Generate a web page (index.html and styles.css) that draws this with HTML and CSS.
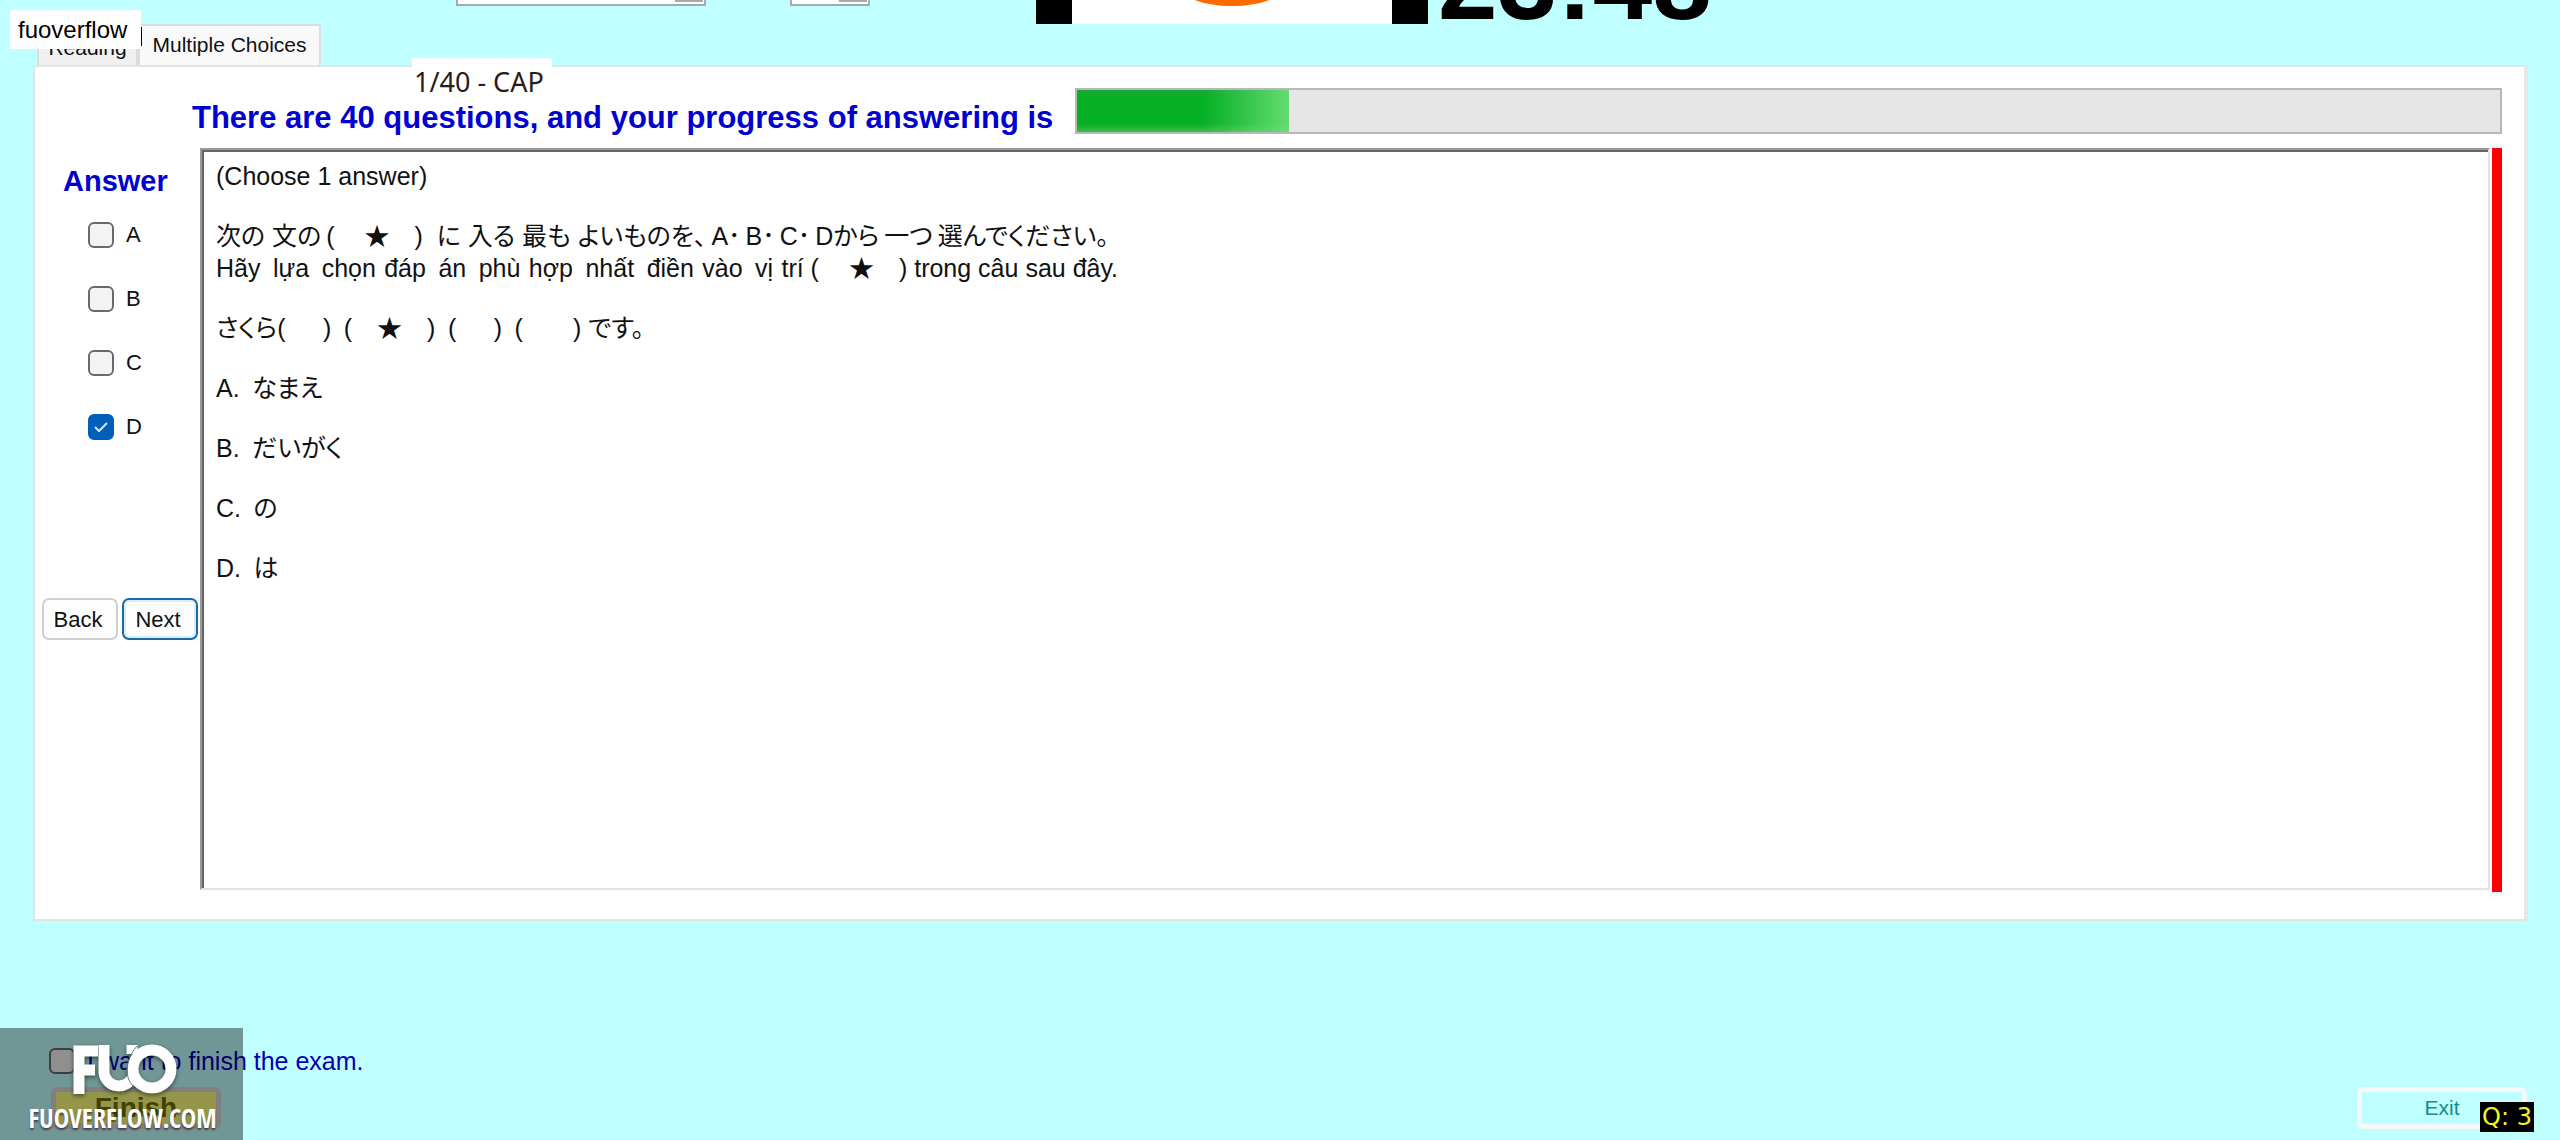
FILE: index.html
```html
<!DOCTYPE html>
<html lang="vi">
<head>
<meta charset="utf-8">
<title>Multiple Choices</title>
<link rel="stylesheet" href="styles.css">
</head>
<body>
<header class="topbar">
  <select class="combo combo-wide" aria-label="Font"><option></option></select>
  <select class="combo combo-size" aria-label="Size"><option></option></select>
  <div class="picture">
    <svg width="76" height="24" viewBox="0 0 76 24" aria-hidden="true"><ellipse cx="38" cy="-14" rx="52" ry="20" fill="#ff6a00"/></svg>
  </div>
  <div class="timer">23:48</div>
</header>

<nav class="tabs">
  <button class="tab tab-reading" type="button">Reading</button>
  <button class="tab tab-active" type="button">Multiple Choices</button>
</nav>

<main class="panel">
  <div class="counter">1/40 - CAP</div>
  <div class="status">
    <label class="status-text" for="progress">There are 40 questions, and your progress of answering is</label>
    <progress class="progress" id="progress" max="1000" value="149"></progress>
  </div>
  <div class="work">
    <aside class="side">
      <h2 class="side-title">Answer</h2>
      <label class="choice"><input class="tick" type="checkbox">A</label>
      <label class="choice"><input class="tick" type="checkbox">B</label>
      <label class="choice"><input class="tick" type="checkbox">C</label>
      <label class="choice"><input class="tick" type="checkbox" checked>D</label>
      <div class="pager">
        <button class="btn" type="button">Back</button>
        <button class="btn btn-focus" type="button">Next</button>
      </div>
    </aside>
    <article class="question">
      <p class="line">(Choose 1 answer)</p>
      <p class="line"><span lang="ja">次の 文の&thinsp;(　&thinsp;★　)&nbsp; に 入る 最も よいものを、&thinsp;A･&thinsp;B･&thinsp;C･&thinsp;Dから&thinsp;一つ&thinsp;選んでください。</span><br>Hãy&ensp;lựa&ensp;chọn&emsp13;đáp&ensp;án&ensp;phù&emsp13;hợp&ensp;nhất&ensp;điền&emsp13;vào&ensp;vị&emsp13;trí (　&thinsp;★　) trong câu sau đây.</p>
      <p class="line" lang="ja">さくら(　&ensp;)&ensp;(　★　)&ensp;(　&ensp;)&ensp;(　&ensp;&ensp;)&nbsp;です。</p>
      <p class="line">A.&ensp;<span lang="ja">なまえ</span></p>
      <p class="line">B.&ensp;<span lang="ja">だいがく</span></p>
      <p class="line">C.&ensp;<span lang="ja">の</span></p>
      <p class="line">D.&ensp;<span lang="ja">は</span></p>
    </article>
    <div class="marker"></div>
  </div>
</main>

<footer class="footer">
  <div class="finish-group">
    <label class="finish-label"><input class="tick" type="checkbox">I want to finish the exam.</label>
    <button class="btn-finish" type="button">Finish</button>
  </div>
  <button class="btn-exit" type="button">Exit</button>
</footer>

<div class="tag">fuoverflow</div>
<div class="qbadge">Q: 3</div>
<div class="watermark">
  <svg class="logo" width="104" height="52" viewBox="0 0 104 52" role="img" aria-label="FUO">
    <g fill="none" stroke="#fff" stroke-width="11">
      <path d="M6 50V7H25M6 26H22"/>
      <path d="M31 1V29A15 15 0 0 0 60 32"/>
      <path d="M59 1V10"/>
      <circle cx="79" cy="25" r="19"/>
    </g>
    <path d="M64 2Q55 12 54 26Q54 36 60 42" fill="none" stroke="#5f8080" stroke-width="1"/>
  </svg>
  <div class="site">FUOVERFLOW.COM</div>
</div>
</body>
</html>
```
FILE: styles.css
```css
* { box-sizing: border-box; }

body {
  margin: 0;
  min-height: 100vh;
  position: relative;
  background: #c0ffff;
  color: #111;
  font-family: "Liberation Sans", "Noto Sans CJK JP", sans-serif;
  font-size: 25px;
}

button, select { font-family: inherit; margin: 0; }

[lang="ja"] { font-feature-settings: "palt"; }

/* The top bar shows only the lower edge of its controls */
.topbar {
  display: flex;
  align-items: flex-start;
  height: 24px;
  overflow: hidden;
  padding-left: 456px;
}
.combo {
  appearance: none;
  height: 30px;
  margin-top: -24px;
  border: 2px solid #a0aab0;
  border-radius: 0;
  background: linear-gradient(#a8a8a8, #a8a8a8) right 1px top / 28px 24px no-repeat #fff;
}
.combo-wide { width: 250px; }
.combo-size { width: 80px; margin-left: 84px; }
.picture {
  display: flex;
  justify-content: center;
  width: 392px;
  height: 24px;
  margin-left: 166px;
  border: solid #000;
  border-width: 0 36px;
  background: #fff;
}
.timer {
  margin: -78px 0 0 10px;
  color: #000;
  font-size: 107px;
  font-weight: bold;
  line-height: 120px;
}

.tabs {
  display: flex;
  align-items: flex-end;
  height: 42px;
  padding-left: 37px;
}
.tab {
  border: 2px solid #dcdcdc;
  border-bottom: 0;
  background: #f0f0f0;
  color: #111;
  font-size: 21px;
  line-height: 24px;
}
.tab-reading { width: 101px; height: 36px; padding: 4px 0 6px; }
.tab-active { width: 183px; height: 42px; padding: 2px 0 4px; background: #f9f9f9; }

.panel {
  position: relative;
  margin: -1px 32px 0 33px;
  padding: 21px 22px 27px 0;
  border: 2px solid #e0e6e6;
  border-right: 4px solid #e4e8e8;
  background: #fff;
}
.counter {
  position: absolute;
  left: 377px;
  top: -9px;
  width: 140px;
  padding-left: 2px;
  background: #fff;
  color: #2a1c1c;
  font-family: "Noto Sans", sans-serif;
  font-size: 27px;
  line-height: 48px;
}
.status {
  display: flex;
  align-items: center;
  gap: 22px;
  padding-left: 157px;
}
.status-text, .side-title {
  color: #0000d0;
  font-weight: bold;
  line-height: 32px;
}
.status-text { padding-top: 14px; font-size: 31px; white-space: nowrap; }
.progress {
  appearance: none;
  flex: 1;
  min-width: 0;
  height: 46px;
  border: 2px solid #b8b8b8;
}
.progress::-webkit-progress-bar { background: #e6e6e6; }
.progress::-webkit-progress-value {
  background:
    linear-gradient(to right, rgba(110, 225, 120, 0) 60%, rgba(110, 225, 120, 0.9)),
    linear-gradient(#18a835, #06b025 15%, #06b025 80%, #3dbb50);
}

.work {
  display: flex;
  margin-top: 14px;
  min-height: 744px;
}
.side {
  display: flex;
  flex-direction: column;
  flex: 0 0 165px;
}
.side-title { margin: 17px 0 6px 28px; font-size: 29px; }
.choice {
  display: flex;
  align-items: center;
  gap: 12px;
  height: 64px;
  padding-left: 53px;
  font-size: 22px;
}
.tick {
  appearance: none;
  flex: none;
  width: 26px;
  height: 26px;
  margin: 0;
  border: 2px solid #6a6a6a;
  border-radius: 6px;
  background: #f3f3f3;
}
.tick:checked {
  border-color: #005fb8;
  background: #005fb8 url("data:image/svg+xml,%3Csvg xmlns='http://www.w3.org/2000/svg' viewBox='0 0 22 22'%3E%3Cpath d='M5 11l4 4 8-8' fill='none' stroke='%23cfe6f8' stroke-width='2'/%3E%3C/svg%3E");
}
.pager {
  display: flex;
  gap: 4px;
  margin-top: 139px;
  padding-left: 7px;
}
.btn {
  width: 76px;
  height: 42px;
  padding: 2px 4px 0 0;
  border: 2px solid #cfcfcf;
  border-radius: 7px;
  background: #fdfdfd;
  color: #111;
  font-size: 22px;
}
.btn-focus { border-color: #1a6aa5; box-shadow: inset 0 0 0 2px #d8ecfa; }

.question {
  flex: 1;
  margin-bottom: 2px;
  padding: 10px 12px 10px 14px;
  border: 2px solid;
  border-color: #9a9a9a #e3e3e3 #e3e3e3 #9a9a9a;
  box-shadow: inset 2px 2px 0 #666;
  line-height: 32px;
}
.line { margin: 0 0 28px; }
.marker { width: 10px; margin-left: 2px; background: #f00; }

.footer {
  display: flex;
  justify-content: space-between;
  align-items: flex-end;
  margin-top: 122px;
  padding: 0 33px 13px 49px;
}
.finish-group { display: flex; flex-direction: column; gap: 10px; }
.finish-label {
  display: flex;
  align-items: center;
  gap: 12px;
  padding-top: 2px;
  color: #0000b4;
  line-height: 32px;
}
.btn-finish {
  width: 170px;
  height: 42px;
  margin-left: 2px;
  padding: 0;
  border: 5px solid #dcd8dc;
  border-radius: 6px;
  background: #ffff80;
  color: #707000;
  font-size: 28px;
  font-weight: bold;
  line-height: 32px;
}
.btn-exit {
  width: 170px;
  height: 42px;
  padding: 0;
  border: 5px solid #f4f8f8;
  border-radius: 6px;
  background: #c0ffff;
  color: #148c8c;
  font-size: 21px;
}

.tag {
  position: absolute;
  left: 10px;
  top: 10px;
  width: 131px;
  padding: 1px 0 0 8px;
  background: #fff;
  color: #000;
  font-size: 24px;
  line-height: 38px;
}
.tag::after {
  content: "";
  position: absolute;
  left: 100%;
  top: 17px;
  width: 1px;
  height: 19px;
  background: #000;
}
.qbadge {
  position: absolute;
  right: 26px;
  bottom: 10px;
  width: 54px;
  background: #000;
  color: #f4f420;
  font-family: "DejaVu Sans", sans-serif;
  font-size: 24px;
  line-height: 30px;
  text-align: center;
  white-space: nowrap;
}
.watermark {
  position: absolute;
  left: 0;
  bottom: 0;
  display: flex;
  flex-direction: column;
  align-items: center;
  width: 243px;
  height: 114px;
  padding: 16px 0 0 2px;
  background: rgba(0, 0, 0, 0.41);
  color: #fff;
}
.logo { flex: none; margin-left: 4px; filter: drop-shadow(0 2px 2px rgba(0, 0, 0, 0.5)); }
.site {
  margin-top: 8px;
  font-family: "Liberation Sans Narrow", "Open Sans Condensed", "Liberation Sans", sans-serif;
  font-size: 26px;
  font-weight: bold;
  line-height: 28px;
  text-shadow: 0 2px 2px rgba(0, 0, 0, 0.5);
}
```
